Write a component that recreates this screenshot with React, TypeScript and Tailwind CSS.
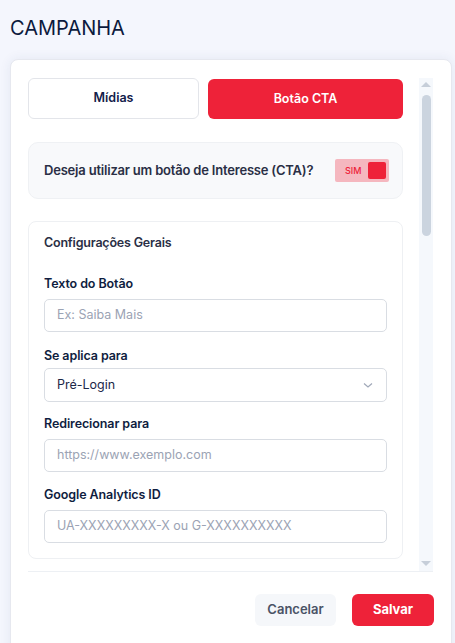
import React from "react";

const font = { fontFamily: "Inter, 'Noto Sans', sans-serif" };

function Label({ children }: { children: React.ReactNode }) {
  return <div className="text-[12.5px] font-semibold text-[#0f1d40] leading-[18px] tracking-[-0.1px]">{children}</div>;
}

function Input({ placeholder }: { placeholder: string }) {
  return (
    <div className="mt-[6px] h-[33px] rounded-[5px] border border-[#d9dde3] flex items-center px-[12px] text-[12.5px] text-[#9ba3b4]">
      {placeholder}
    </div>
  );
}

export default function App() {
  return (
    <div className="w-[455px] h-[643px] bg-[#f4f6fd] overflow-hidden" style={font}>
      <div className="pl-[10px] pt-[16px] h-[59px] text-[20px] text-[#0c1a3d] leading-[24px]">CAMPANHA</div>
      <div className="ml-[10px] w-[442px] h-[600px] bg-white rounded-[8px] border border-[#e6e8ef] shadow-[0_0_12px_rgba(40,60,120,0.08)] pt-[18px] px-[17px]">
        <div className="flex h-[493px]">
          <div className="w-[375px] h-[493px] overflow-hidden flex flex-col">
            <div className="flex gap-[9px] shrink-0">
              <div className="w-[171px] h-[41px] rounded-[6px] border border-[#e3e5ea] flex items-center justify-center text-[12.5px] font-semibold text-[#12204a]">
                Mídias
              </div>
              <div className="w-[195px] h-[40px] mt-[1px] rounded-[6px] bg-[#ee2239] flex items-center justify-center text-[12.5px] font-semibold text-white">
                Botão CTA
              </div>
            </div>
            <div className="shrink-0 mt-[23px] h-[57px] rounded-[10px] bg-[#f8f9fb] border border-[#eff1f4] flex items-center justify-between pl-[15px] pr-[13px]">
              <div className="text-[13px] font-semibold text-[#2a2f45] tracking-[-0.2px]">Deseja utilizar um botão de Interesse (CTA)?</div>
              <div className="w-[54px] h-[23px] rounded-[2px] bg-[#f5b7bf] flex items-center justify-between pl-[10px] pr-[3px]">
                <span className="text-[9px] text-[#ee2239] font-medium">SIM</span>
                <span className="w-[18px] h-[17px] rounded-[2px] bg-[#ee2239]" />
              </div>
            </div>
            <div className="shrink-0 mt-[22px] rounded-[8px] border border-[#eef0f3] px-[15px] pt-[12px] pb-[15px] flex flex-col">
              <div className="text-[12.5px] font-semibold text-[#2a2f45] leading-[18px] tracking-[-0.2px]">Configurações Gerais</div>
              <div className="mt-[23px] flex flex-col">
                <Label>Texto do Botão</Label>
                <Input placeholder="Ex: Saiba Mais" />
                <div className="mt-[15px]">
                  <Label>Se aplica para</Label>
                </div>
                <div className="mt-[3px] h-[34px] rounded-[5px] border border-[#d9dde3] flex items-center justify-between pl-[12px] pr-[12px] text-[12.5px] text-[#1c2748]">
                  <span>Pré-Login</span>
                  <svg width="12" height="12" viewBox="0 0 12 12" fill="none" stroke="#a0a8b8" strokeWidth="1.2">
                    <path d="M2 4.5 L6 8 L10 4.5" />
                  </svg>
                </div>
                <div className="mt-[13px]">
                  <Label>Redirecionar para</Label>
                </div>
                <Input placeholder="https://www.exemplo.com" />
                <div className="mt-[14px]">
                  <Label>Google Analytics ID</Label>
                </div>
                <Input placeholder="UA-XXXXXXXXX-X ou G-XXXXXXXXXX" />
              </div>
            </div>
          </div>
          <div className="ml-[16px] w-[14px] h-[493px] bg-[#f5f8fc] flex flex-col items-center">
            <div className="mt-[4px] w-0 h-0 border-l-[5px] border-r-[5px] border-b-[5px] border-l-transparent border-r-transparent border-b-[#c6ced9]" />
            <div className="mt-[8px] w-[9px] h-[141px] rounded-full bg-[#cbd4df]" />
            <div className="flex-1" />
            <div className="mb-[5px] w-0 h-0 border-l-[5px] border-r-[5px] border-t-[5px] border-l-transparent border-r-transparent border-t-[#c6ced9]" />
          </div>
        </div>
        <div className="h-px bg-[#edf0f4] w-[405px]" />
        <div className="flex justify-end gap-[16px] pt-[22px] w-[406px]">
          <div className="w-[81px] h-[32px] rounded-[6px] bg-[#f5f7fa] flex items-center justify-center text-[13px] font-semibold text-[#4a5366]">
            Cancelar
          </div>
          <div className="w-[82px] h-[32px] rounded-[6px] bg-[#ee2239] flex items-center justify-center text-[13px] font-bold text-white">
            Salvar
          </div>
        </div>
      </div>
    </div>
  );
}
